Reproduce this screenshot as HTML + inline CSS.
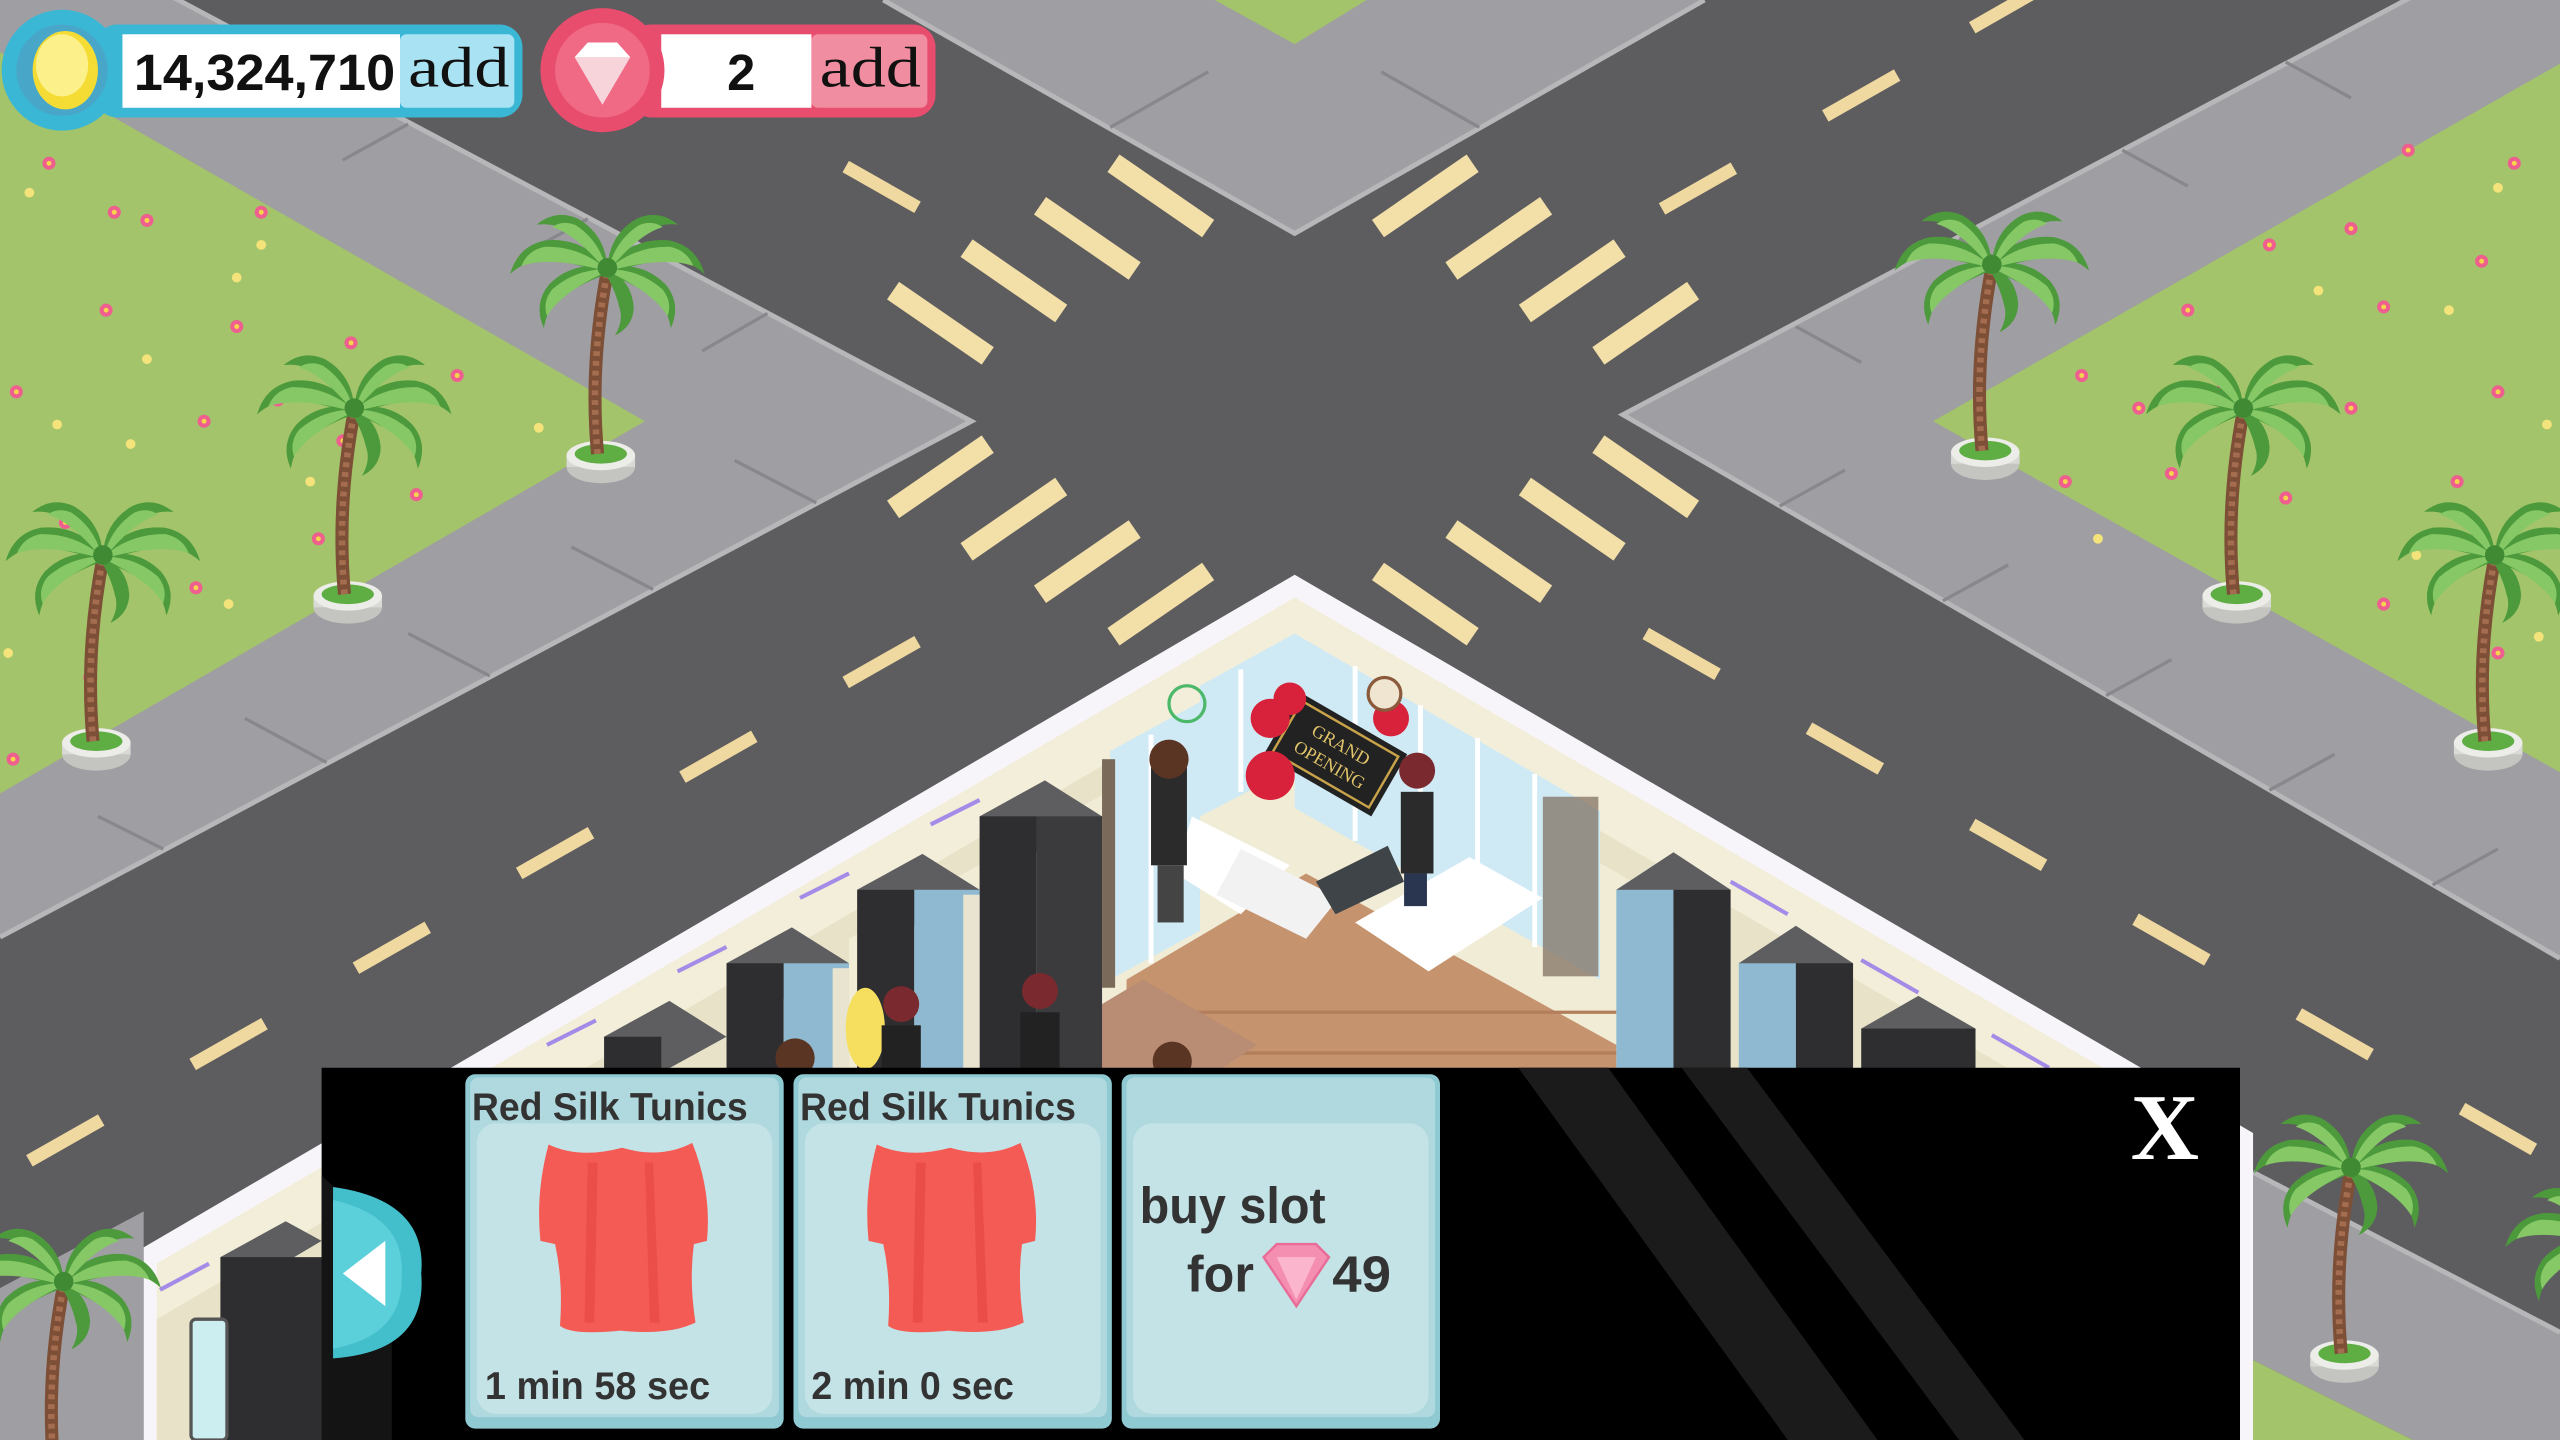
<!DOCTYPE html>
<html><head><meta charset="utf-8"><style>
html,body{margin:0;padding:0;background:#5d5c5f;overflow:hidden}
svg{display:block}
</style></head><body>
<svg width="2560" height="1440" viewBox="0 0 1568 882" preserveAspectRatio="none" xmlns="http://www.w3.org/2000/svg">
<defs>
<path id="lf" d="M0,0 Q18,-16 40,-10 Q56,-4 58,14 Q48,2 36,2 Q20,0 0,4Z"/>
<path id="lfl" d="M2,0 Q20,-10 40,-6 Q50,-2 52,8 Q36,-1 2,2Z"/>
<g id="palm">
  <ellipse cx="0" cy="2" rx="21" ry="10" fill="#c4c4c1"/>
  <rect x="-21" y="-5" width="42" height="7" fill="#d9d9d6"/>
  <ellipse cx="0" cy="-5" rx="21" ry="9" fill="#ecece9"/>
  <ellipse cx="0" cy="-6" rx="16" ry="6" fill="#5fae44"/>
  <path d="M-2,-6 Q-7,-60 4,-118" stroke="#7d4f37" stroke-width="8" fill="none"/>
  <path d="M-2,-6 Q-7,-60 4,-118" stroke="#a46d4f" stroke-width="4" stroke-dasharray="3 3" fill="none"/>
  <g transform="translate(4,-120)">
    <g fill="#4c9a3c">
      <use href="#lf" transform="rotate(-10)"/>
      <use href="#lf" transform="rotate(30) scale(0.9)"/>
      <use href="#lf" transform="rotate(-45) scale(0.85)"/>
      <use href="#lf" transform="scale(-1,1) rotate(-10)"/>
      <use href="#lf" transform="scale(-1,1) rotate(30) scale(0.9)"/>
      <use href="#lf" transform="scale(-1,1) rotate(-45) scale(0.85)"/>
      <use href="#lf" transform="rotate(70) scale(0.7)"/>
    </g>
    <g fill="#86c866">
      <use href="#lfl" transform="rotate(-10)"/>
      <use href="#lfl" transform="rotate(30) scale(0.9)"/>
      <use href="#lfl" transform="scale(-1,1) rotate(-10)"/>
      <use href="#lfl" transform="scale(-1,1) rotate(30) scale(0.9)"/>
      <use href="#lfl" transform="rotate(-45) scale(0.8)"/>
      <use href="#lfl" transform="scale(-1,1) rotate(-45) scale(0.8)"/>
    </g>
    <circle cx="0" cy="0" r="6" fill="#3f8a33"/>
  </g>
</g>
<g id="fp"><circle r="4" fill="#ee5f8f"/><circle r="1.5" fill="#f7d54a"/></g>
<g id="fy"><circle r="3" fill="#f4e37a"/></g>
</defs>

<rect width="1568" height="882" fill="#5d5c5f"/>

<polygon points="0,-58 595,258 0,574" fill="#9f9ea2"/>
<polyline points="0,-58 595,258 0,574" fill="none" stroke="#b7b6b9" stroke-width="3"/>
<g stroke="#88878b" stroke-width="2">
  <line x1="100" y1="520" x2="60" y2="500"/><line x1="200" y1="467" x2="150" y2="440"/>
  <line x1="300" y1="414" x2="250" y2="388"/><line x1="400" y1="361" x2="350" y2="335"/>
  <line x1="500" y1="308" x2="450" y2="282"/>
  <line x1="470" y1="192" x2="430" y2="215"/><line x1="360" y1="134" x2="320" y2="156"/>
  <line x1="250" y1="76" x2="210" y2="98"/><line x1="140" y1="18" x2="100" y2="40"/>
</g>
<polygon points="0,32 395,258 0,486" fill="#a3c46a"/>

<polygon points="541,0 793,143 1044,0" fill="#9f9ea2"/>
<polyline points="541,0 793,143 1044,0" fill="none" stroke="#b7b6b9" stroke-width="3"/>
<g stroke="#88878b" stroke-width="2">
  <line x1="680" y1="78" x2="740" y2="44"/><line x1="906" y1="78" x2="846" y2="44"/>
</g>
<polygon points="744,0 837,0 793,27" fill="#a3c46a"/>

<polygon points="1568,-50 994,254 1568,587" fill="#9f9ea2"/>
<polyline points="1568,-50 994,254 1568,587" fill="none" stroke="#b7b6b9" stroke-width="3"/>
<g stroke="#88878b" stroke-width="2">
  <line x1="1090" y1="310" x2="1130" y2="288"/><line x1="1190" y1="368" x2="1230" y2="346"/>
  <line x1="1290" y1="426" x2="1330" y2="404"/><line x1="1390" y1="484" x2="1430" y2="462"/>
  <line x1="1490" y1="542" x2="1530" y2="520"/>
  <line x1="1100" y1="200" x2="1140" y2="222"/><line x1="1200" y1="146" x2="1240" y2="168"/>
  <line x1="1300" y1="92" x2="1340" y2="114"/><line x1="1400" y1="38" x2="1440" y2="60"/>
</g>
<polygon points="1184,258 1568,39 1568,473" fill="#a3c46a"/>

<polygon points="1380,718 1568,816 1568,882 1478,882 1380,833" fill="#9f9ea2"/>
<line x1="1380" y1="718" x2="1568" y2="816" stroke="#b7b6b9" stroke-width="3"/>
<polygon points="1380,833 1478,882 1380,882" fill="#a3c46a"/>
<polygon points="0,789 88,742 88,882 0,882" fill="#9f9ea2"/>

<g>
<use href="#fp" x="30" y="100"/><use href="#fp" x="90" y="135"/><use href="#fp" x="70" y="130"/><use href="#fp" x="160" y="130"/>
<use href="#fp" x="65" y="190"/><use href="#fp" x="145" y="200"/><use href="#fp" x="215" y="210"/><use href="#fp" x="280" y="230"/>
<use href="#fp" x="10" y="240"/><use href="#fp" x="125" y="258"/><use href="#fp" x="210" y="270"/><use href="#fp" x="255" y="303"/>
<use href="#fp" x="40" y="320"/><use href="#fp" x="195" y="330"/><use href="#fp" x="120" y="360"/><use href="#fp" x="55" y="415"/>
<use href="#fp" x="8" y="465"/><use href="#fp" x="170" y="245"/>
<use href="#fy" x="18" y="118"/><use href="#fy" x="160" y="150"/><use href="#fy" x="145" y="170"/><use href="#fy" x="90" y="220"/>
<use href="#fy" x="35" y="260"/><use href="#fy" x="330" y="262"/><use href="#fy" x="80" y="272"/><use href="#fy" x="140" y="370"/>
<use href="#fy" x="5" y="400"/><use href="#fy" x="190" y="295"/>
<use href="#fp" x="1475" y="92"/><use href="#fp" x="1540" y="100"/><use href="#fp" x="1390" y="150"/><use href="#fp" x="1440" y="140"/>
<use href="#fp" x="1520" y="160"/><use href="#fp" x="1340" y="190"/><use href="#fp" x="1460" y="188"/><use href="#fp" x="1275" y="230"/>
<use href="#fp" x="1360" y="240"/><use href="#fp" x="1310" y="250"/><use href="#fp" x="1530" y="240"/><use href="#fp" x="1265" y="295"/>
<use href="#fp" x="1400" y="305"/><use href="#fp" x="1440" y="250"/><use href="#fp" x="1505" y="295"/><use href="#fp" x="1460" y="370"/>
<use href="#fp" x="1550" y="330"/><use href="#fp" x="1530" y="400"/><use href="#fp" x="1330" y="290"/>
<use href="#fy" x="1530" y="115"/><use href="#fy" x="1420" y="178"/><use href="#fy" x="1500" y="190"/><use href="#fy" x="1380" y="255"/>
<use href="#fy" x="1560" y="260"/><use href="#fy" x="1285" y="330"/><use href="#fy" x="1480" y="340"/><use href="#fy" x="1555" y="390"/>
</g>

<g stroke="#f3dfa8" stroke-width="13">
  <line x1="682" y1="100" x2="740" y2="140"/><line x1="637" y1="126" x2="695" y2="166"/>
  <line x1="592" y1="152" x2="650" y2="192"/><line x1="547" y1="178" x2="605" y2="218"/>
  <line x1="902" y1="100" x2="844" y2="140"/><line x1="947" y1="126" x2="889" y2="166"/>
  <line x1="992" y1="152" x2="934" y2="192"/><line x1="1037" y1="178" x2="979" y2="218"/>
  <line x1="547" y1="312" x2="605" y2="272"/><line x1="592" y1="338" x2="650" y2="298"/>
  <line x1="637" y1="364" x2="695" y2="324"/><line x1="682" y1="390" x2="740" y2="350"/>
  <line x1="1037" y1="312" x2="979" y2="272"/><line x1="992" y1="338" x2="934" y2="298"/>
  <line x1="947" y1="364" x2="889" y2="324"/><line x1="902" y1="390" x2="844" y2="350"/>
</g>
<g stroke="#efd9a0" stroke-width="8">
  <line x1="518" y1="418" x2="562" y2="393"/><line x1="418" y1="476" x2="462" y2="451"/>
  <line x1="318" y1="535" x2="362" y2="510"/><line x1="218" y1="593" x2="262" y2="568"/>
  <line x1="118" y1="652" x2="162" y2="627"/><line x1="18" y1="711" x2="62" y2="686"/>
  <line x1="1018" y1="128" x2="1062" y2="103"/><line x1="1118" y1="71" x2="1162" y2="46"/>
  <line x1="1208" y1="17" x2="1250" y2="-7"/>
  <line x1="518" y1="102" x2="562" y2="127"/>
  <line x1="1008" y1="388" x2="1052" y2="413"/><line x1="1108" y1="446" x2="1152" y2="471"/>
  <line x1="1208" y1="505" x2="1252" y2="530"/><line x1="1308" y1="563" x2="1352" y2="588"/>
  <line x1="1408" y1="621" x2="1452" y2="646"/><line x1="1508" y1="679" x2="1552" y2="704"/>
</g>

<polygon points="793,352 1380,694 1380,882 88,882 88,764" fill="#f7f5fa"/>
<polygon points="793,366 1372,703 1372,882 96,882 96,774" fill="#f2eed9"/>
<polygon points="793,400 1372,737 1372,882 96,882 96,808" fill="#e8e3c8"/>
<polygon points="793,420 1060,575 1060,882 520,882 520,575" fill="#f0ecd6"/>
<polygon points="735,420 793,388 793,470 735,500" fill="#cfeaf4"/>
<polygon points="793,388 980,497 980,600 793,495" fill="#cfeaf4"/>
<polygon points="680,460 735,430 735,570 680,600" fill="#cfeaf4"/>
<g stroke="#ffffff" stroke-width="3">
  <line x1="705" y1="450" x2="705" y2="590"/><line x1="760" y1="410" x2="760" y2="485"/>
  <line x1="830" y1="408" x2="830" y2="515"/><line x1="870" y1="432" x2="870" y2="540"/>
  <line x1="905" y1="452" x2="905" y2="560"/><line x1="940" y1="474" x2="940" y2="580"/>
</g>
<g fill="#7a6a5a"><rect x="675" y="465" width="8" height="140"/><rect x="945" y="488" width="34" height="110" opacity=".7"/></g>
<polygon points="690,600 800,535 990,640 990,882 690,882" fill="#c6936f"/>
<g stroke="#b27e5b" stroke-width="2">
  <line x1="690" y1="620" x2="990" y2="620"/><line x1="690" y1="645" x2="990" y2="645"/>
</g>
<polygon points="600,660 700,600 770,640 680,700" fill="#b98c74"/>
<polygon points="730,500 790,530 760,560 720,535" fill="#ffffff"/>
<polygon points="760,520 820,550 800,575 745,548" fill="#f2f2f2"/>
<polygon points="830,565 900,525 945,550 875,595" fill="#ffffff"/>
<polygon points="806,540 850,518 860,540 818,560" fill="#3e4447"/>
<g transform="translate(818,462) rotate(30)">
  <rect x="-38" y="-22" width="76" height="44" fill="#222"/>
  <rect x="-34" y="-18" width="68" height="36" fill="none" stroke="#c8a34a" stroke-width="1.5"/>
  <text x="0" y="-3" font-family="Liberation Serif,serif" font-size="11" fill="#e2c56a" text-anchor="middle">GRAND</text>
  <text x="0" y="11" font-family="Liberation Serif,serif" font-size="11" fill="#e2c56a" text-anchor="middle">OPENING</text>
</g>
<g fill="#d8213a"><circle cx="778" cy="440" r="12"/><circle cx="790" cy="428" r="10"/><circle cx="852" cy="440" r="11"/><circle cx="778" cy="475" r="15"/></g>
<circle cx="727" cy="431" r="11" fill="none" stroke="#4cb86a" stroke-width="2"/>
<circle cx="848" cy="425" r="10" fill="#efe5d0" stroke="#8b5a3c" stroke-width="2"/>
<g><rect x="705" y="470" width="22" height="60" fill="#2b2b2b"/><circle cx="716" cy="465" r="12" fill="#5b3524"/><rect x="709" y="530" width="16" height="35" fill="#444"/></g>
<g><rect x="858" y="485" width="20" height="50" fill="#2b2b2b"/><circle cx="868" cy="472" r="11" fill="#7a2a2e"/><rect x="860" y="535" width="14" height="20" fill="#2a3550"/></g>
<g>
  <polygon points="600,500 640,478 675,500 635,522" fill="#5e5e60"/><rect x="600" y="500" width="35" height="160" fill="#2e2e30"/><rect x="635" y="500" width="40" height="160" fill="#3b3b3d"/>
  <polygon points="525,545 565,523 600,545 560,567" fill="#5e5e60"/><rect x="525" y="545" width="35" height="115" fill="#2e2e30"/><rect x="560" y="545" width="40" height="115" fill="#8fb9d0"/>
  <rect x="590" y="548" width="10" height="112" fill="#e9e4cf"/>
  <polygon points="445,590 485,568 520,590 480,612" fill="#5e5e60"/><rect x="445" y="590" width="35" height="70" fill="#2e2e30"/><rect x="480" y="590" width="40" height="70" fill="#8fb9d0"/>
  <rect x="510" y="593" width="10" height="67" fill="#e9e4cf"/>
  <polygon points="370,635 410,613 445,635 405,657" fill="#5e5e60"/><rect x="370" y="635" width="35" height="25" fill="#2e2e30"/>
  <polygon points="135,770 175,748 197,760 160,782" fill="#5e5e60"/><rect x="135" y="770" width="62" height="112" fill="#2e2e30"/>
  <rect x="117" y="808" width="22" height="74" rx="3" fill="#cdeef0" stroke="#555" stroke-width="2"/>
</g>
<g stroke="#a58be8" stroke-width="2.5">
  <line x1="570" y1="505" x2="600" y2="490"/><line x1="490" y1="550" x2="520" y2="535"/>
  <line x1="415" y1="595" x2="445" y2="580"/><line x1="335" y1="640" x2="365" y2="625"/>
  <line x1="98" y1="790" x2="128" y2="774"/><line x1="1060" y1="540" x2="1095" y2="560"/>
  <line x1="1140" y1="588" x2="1175" y2="608"/><line x1="1220" y1="634" x2="1255" y2="654"/>
</g>
<g>
  <polygon points="990,545 1025,522 1060,545 1025,568" fill="#5e5e60"/><rect x="990" y="545" width="35" height="115" fill="#8fb9d0"/><rect x="1025" y="545" width="35" height="115" fill="#2e2e30"/>
  <polygon points="1065,590 1100,567 1135,590 1100,613" fill="#5e5e60"/><rect x="1065" y="590" width="35" height="70" fill="#8fb9d0"/><rect x="1100" y="590" width="35" height="70" fill="#2e2e30"/>
  <polygon points="1140,630 1175,610 1210,630 1175,652" fill="#5e5e60"/><rect x="1140" y="630" width="70" height="30" fill="#2e2e30"/>
</g>
<g><ellipse cx="530" cy="630" rx="12" ry="25" fill="#f6de5e"/><circle cx="552" cy="615" r="11" fill="#7a2a2e"/><rect x="540" y="628" width="24" height="30" fill="#222"/>
<circle cx="637" cy="607" r="11" fill="#7a2a2e"/><rect x="625" y="620" width="24" height="40" fill="#222"/><circle cx="487" cy="648" r="12" fill="#5b3524"/><circle cx="718" cy="650" r="12" fill="#5b3524"/></g>

<use href="#palm" x="368" y="284"/><use href="#palm" x="213" y="370"/><use href="#palm" x="59" y="460"/>
<use href="#palm" x="1216" y="282"/><use href="#palm" x="1370" y="370"/><use href="#palm" x="1524" y="460"/>
<use href="#palm" x="1436" y="835"/><use href="#palm" x="35" y="905"/><use href="#palm" x="1590" y="880"/>

<rect x="197" y="654" width="1175" height="228" fill="#000"/>
<polygon points="930,654 985,654 1150,882 1095,882" fill="#1b1b1b"/>
<polygon points="1030,654 1070,654 1240,882 1200,882" fill="#1b1b1b"/>
<polygon points="197,720 240,760 240,882 197,882" fill="#141414"/>
<path d="M204,727 Q262,735 258,780 Q262,828 204,832Z" fill="#43bfcc"/>
<path d="M204,735 Q248,745 246,780 Q248,818 204,826Z" fill="#5cd0da"/>
<polygon points="210,780 236,760 236,800" fill="#ffffff"/>

<g>
  <rect x="285" y="658" width="195" height="217" rx="6" fill="#8fcad3"/>
  <rect x="288" y="660" width="189" height="208" rx="5" fill="#afd9de"/>
  <rect x="292" y="688" width="181" height="178" rx="12" fill="#c4e3e7"/>
  <rect x="486" y="658" width="195" height="217" rx="6" fill="#8fcad3"/>
  <rect x="489" y="660" width="189" height="208" rx="5" fill="#afd9de"/>
  <rect x="493" y="688" width="181" height="178" rx="12" fill="#c4e3e7"/>
  <rect x="687" y="658" width="195" height="217" rx="6" fill="#8fcad3"/>
  <rect x="690" y="660" width="189" height="208" rx="5" fill="#afd9de"/>
  <rect x="694" y="688" width="181" height="178" rx="12" fill="#c4e3e7"/>
</g>
<g fill="#f45b55">
  <path d="M336,701 Q355,710 381,703 Q405,710 424,700 Q436,730 433,760 L425,762 Q422,785 426,810 Q410,818 380,815 Q350,818 343,812 Q345,785 340,762 L331,760 Q328,730 336,701Z"/>
  <path d="M537,701 Q556,710 582,703 Q606,710 625,700 Q637,730 634,760 L626,762 Q623,785 627,810 Q611,818 581,815 Q551,818 544,812 Q546,785 541,762 L532,760 Q529,730 537,701Z"/>
</g>
<g fill="#e5443f" opacity="0.6">
  <path d="M360,712 L358,810 L364,810 L366,712Z"/><path d="M395,712 L398,810 L404,810 L400,712Z"/>
  <path d="M561,712 L559,810 L565,810 L567,712Z"/><path d="M596,712 L599,810 L605,810 L601,712Z"/>
</g>
<g font-family="'Liberation Sans Narrow','Liberation Sans',sans-serif" font-weight="bold" fill="#333">
  <text x="289" y="686" font-size="24" textLength="169" lengthAdjust="spacingAndGlyphs">Red Silk Tunics</text>
  <text x="490" y="686" font-size="24" textLength="169" lengthAdjust="spacingAndGlyphs">Red Silk Tunics</text>
  <text x="297" y="857" font-size="24" textLength="138" lengthAdjust="spacingAndGlyphs">1 min 58 sec</text>
  <text x="497" y="857" font-size="24" textLength="124" lengthAdjust="spacingAndGlyphs">2 min 0 sec</text>
  <text x="698" y="749" font-size="31" textLength="114" lengthAdjust="spacingAndGlyphs">buy slot</text>
  <text x="727" y="791" font-size="31" textLength="41" lengthAdjust="spacingAndGlyphs">for</text>
  <text x="816" y="791" font-size="31" textLength="36" lengthAdjust="spacingAndGlyphs">49</text>
</g>
<g>
  <polygon points="774,770 782,762 806,762 814,770 794,800" fill="#f58fb1" stroke="#e86c97" stroke-width="1.5"/>
  <polygon points="782,770 806,770 794,796" fill="#fbb6cd"/>
</g>
<text x="1326" y="710" font-family="'Liberation Serif',serif" font-weight="bold" font-size="58" fill="#fff" text-anchor="middle">X</text>

<rect x="58" y="15" width="262" height="57" rx="14" fill="#3bb7d6"/>
<rect x="75" y="21" width="170" height="45" fill="#ffffff"/>
<rect x="245" y="21" width="70" height="45" rx="4" fill="#a9e3f3"/>
<circle cx="38" cy="43" r="37" fill="#3bb7d6"/>
<circle cx="38" cy="43" r="28" fill="#48a7c9"/>
<ellipse cx="40" cy="43" rx="20" ry="24" fill="#f5dc34"/>
<ellipse cx="38" cy="40" rx="16" ry="19" fill="#fbf08a"/>
<text x="82" y="55" font-family="'Liberation Sans',sans-serif" font-weight="bold" font-size="31" fill="#111" textLength="160" lengthAdjust="spacingAndGlyphs">14,324,710</text>
<text x="250" y="53" font-family="'Liberation Serif',serif" font-size="35" fill="#111" textLength="62" lengthAdjust="spacingAndGlyphs">add</text>
<rect x="385" y="15" width="188" height="57" rx="14" fill="#e94d6e"/>
<rect x="405" y="21" width="92" height="45" fill="#ffffff"/>
<rect x="497" y="21" width="71" height="45" rx="4" fill="#f18da0"/>
<circle cx="369" cy="43" r="38" fill="#e94d6e"/>
<circle cx="369" cy="43" r="29" fill="#f06a86"/>
<polygon points="352,35 360,26 378,26 386,35 369,64" fill="#ffffff"/>
<polygon points="352,35 386,35 369,64" fill="#f7d3da"/>
<text x="454" y="55" font-family="'Liberation Sans',sans-serif" font-weight="bold" font-size="31" fill="#111" text-anchor="middle">2</text>
<text x="502" y="53" font-family="'Liberation Serif',serif" font-size="35" fill="#111" textLength="62" lengthAdjust="spacingAndGlyphs">add</text>
</svg>
</body></html>
